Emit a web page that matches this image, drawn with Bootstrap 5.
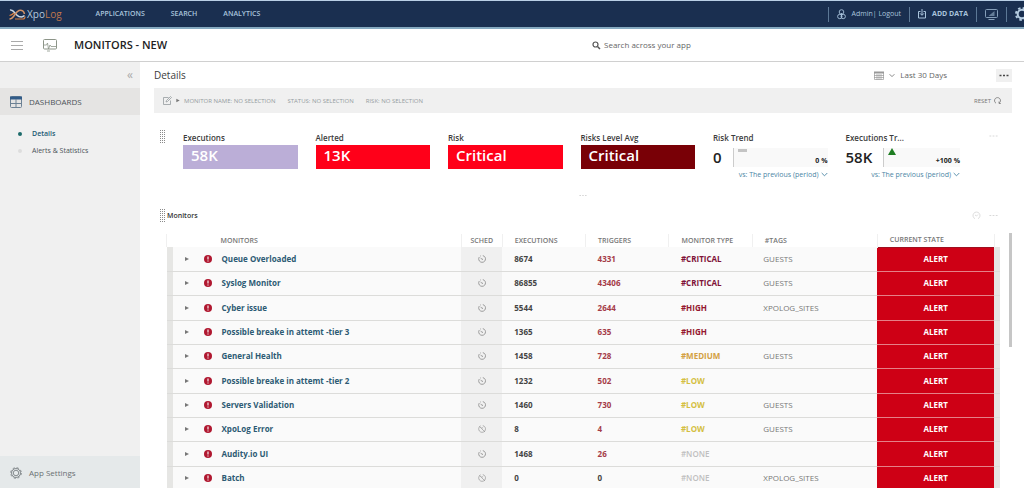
<!DOCTYPE html>
<html lang="en">
<head>
<meta charset="utf-8">
<meta name="viewport" content="width=device-width, initial-scale=1">
<title>XpoLog - Monitors</title>
<link href="https://cdn.jsdelivr.net/npm/bootstrap@5.3.0/dist/css/bootstrap.min.css" rel="stylesheet">
<style>
body { font-family: "Open Sans", "Noto Sans", sans-serif; font-size: 8px; line-height: 12px; color: #444; background: #fff; }
a { color: inherit; text-decoration: none; }
button { border: 0; background: none; padding: 0; color: inherit; font: inherit; }
svg { display: block; fill: none; stroke: currentColor; flex: none; }
.topbar { height: 29px; background: #1a2f50; border-top: 1px solid #b9cfe6; border-bottom: 2px solid #86aac0; color: #a9c4dc; font-size: 7px; padding-left: 9px; }
.brand-name { font-size: 10px; color: #b5c9de; margin-left: 1px; }
.brand-name b { color: #c0764c; font-weight: 400; }
.main-links { margin-left: 34px; gap: 26px; font-weight: 600; }
.tool { height: 15px; border-left: 1px solid #5c7896; padding: 0 8px; gap: 6px; }
.tool-gear { width: 18px; overflow: hidden; padding-right: 0; color: #b4cbe0; }
.titlebar { height: 33px; border-bottom: 1px solid #d0d0d0; padding-left: 11px; }
.titlebar h1 { font-size: 11px; line-height: 16px; font-weight: 600; color: #222; }
.menu-btn { color: #aaa; margin-right: 20px; }
.app-icon { color: #8c9488; margin-right: 17px; }
.search { flex: 0 0 432px; gap: 3px; color: #555; }
.search input { border: 0; outline: 0; padding: 0; width: 200px; font-size: 8px; color: #555; }
.search input::placeholder { color: #666; opacity: 1; }
.side { width: 140px; flex: none; background: #f0f0f0; color: #4c5358; }
.side-fold { height: 26px; padding: 0 7px; color: #aaa; font-size: 12px; }
.side-group { height: 27px; padding-left: 10px; gap: 7px; background: #e5e4e3; }
.side-list { padding: 10px 0 0 18px; }
.side-list a { height: 17px; gap: 10px; font-size: 7px; }
.side-list a.current { font-weight: 600; color: #235a73; }
.dot { width: 4px; height: 4px; border-radius: 50%; background: #ddd; }
.current .dot { background: #1d6b6b; }
.side-foot { height: 32px; padding: 2px 0 0 10px; gap: 7px; background: #e5e9ea; color: #6a7074; }
.content { padding: 0 12px 0 14px; min-width: 0; }
.page-head { height: 26px; }
.page-head h2 { font-size: 10px; line-height: 14px; font-weight: 400; color: #3c3c3c; }
.range { gap: 5px; margin-right: 49px; color: #666; }
.range-icon { color: #999; }
.more { width: 16px; height: 13px; background: #f0f0f0; }
.filters { height: 25px; background: #f0f0f0; color: #959c9f; font-size: 6px; padding: 0 11px 0 9px; }
.filter-items { gap: 12px; }
.reset { gap: 3px; color: #777; }
.kpis { padding: 16px 14px 0 6px; }
.grip { flex: none; width: 5px; height: 15px; background: linear-gradient(#fff 50%, transparent 50%) 0 0 / 5px 2px, linear-gradient(90deg, #8a8a8a 50%, #fff 50%) 0 0 / 2px 2px; }
.kpi-grid { display: grid; grid-template-columns: repeat(6, 1fr); margin: 1px 11px 0 18px; }
.kpi { padding-right: 18px; }
.kpi-name { font-size: 8px; font-weight: 600; line-height: 12px; color: #3b3b3b; padding-top: 2px; }
.kpi-box { height: 24px; padding-left: 8px; font-size: 15px; line-height: 21px; font-weight: 600; color: #fff; margin-top: 1px; }
.trend { height: 24px; margin-top: 1px; color: #222; gap: 11px; }
.trend-value { font-size: 15px; line-height: 24px; font-weight: 600; }
.trend-area { background: #f9f9f9; border-left: 1px solid #ccc; height: 19px; padding-left: 4px; font-weight: 700; font-size: 7px; }
.flat { width: 9px; height: 3px; background: #c4c4c4; margin-top: 1px; }
.up { width: 0; height: 0; border: 4px solid transparent; border-top: 0; border-bottom: 7px solid #1e7d22; }
.vs { font-size: 7px; line-height: 11px; color: #4b86a5; gap: 2px; }
.split { height: 17px; color: #ccc; }
.faint { color: #d4d4d4; }
.panel { padding: 11px 0 0 6px; }
.panel-head { height: 15px; padding-right: 14px; }
.panel-head h3 { font-size: 7px; line-height: 12px; font-weight: 600; color: #333; margin-left: 2px; }
.grid-wrap { margin: 11px 9px 0 6px; min-width: 0; }
.scroll { flex: none; width: 3px; height: 114px; background: #c6c6c6; margin-top: 10px; }
.monitors { width: 100%; table-layout: fixed; border-collapse: collapse; font-size: 8px; line-height: 12px; }
.monitors th { height: 13px; padding: 0 0 0 12px; font-size: 7px; line-height: 12px; font-weight: 600; color: #777; border-left: 1px solid #f0f0f0; white-space: nowrap; }
.monitors tbody tr { height: 24px; background: #fafafa; border-bottom: 1px solid #dcdcda; font-weight: 700; }
.monitors tbody tr:nth-child(3n) { height: 25px; }
.monitors td { padding: 0 0 0 12px; white-space: nowrap; }
.monitors .edge { padding: 0; background: #e6e6e4; }
.monitors .name { padding-left: 12px; color: #2d5a74; }
.monitors th.name { padding-left: 48px; color: #777; border: 0; }
.arrow { margin-right: 15px; }
.bang { margin-right: 10px; }
.monitors .sched { padding: 0; background: #f0f0f0; color: #888; }
.monitors th.sched { background: none; text-align: center; color: #777; }
.monitors .hits { color: #a53c48; }
.monitors .tags { font-weight: 400; color: #777; padding-left: 11px; }
.monitors td.state { background: #ce0015; color: #fff; text-align: center; padding: 0; border-bottom: 1px solid #e58088; }
.monitors tbody tr:first-child td.state { border-top: 1px solid #9f1020; }
.crit { color: #7f1238; } .high { color: #95182f; } .med { color: #d3a043; } .low { color: #d4bf42; } .monitors .none { color: #bfbfbf; font-weight: 600; }
.c-exec, .c-trig, .c-type { width: 10%; } .c-tags { width: 15%; } .c-state { width: 14%; } .c-sched { width: 41px; } .c-edge { width: 6px; }
</style>
<script src="https://cdn.jsdelivr.net/npm/bootstrap@5.3.0/dist/js/bootstrap.bundle.min.js"></script>
</head>
<body class="vh-100 d-flex flex-column overflow-hidden">
<svg width="0" height="0" class="position-absolute">
  <symbol id="play" viewBox="0 0 4 6"><path d="M0 1v4l4-2z" fill="#777" stroke="none"/></symbol>
  <symbol id="warn" viewBox="0 0 8 8"><circle cx="4" cy="4" r="4" fill="#b01830" stroke="none"/><path d="M4 1.6v3M4 5.5v1" stroke="#fff" stroke-width="1.1"/></symbol>
  <symbol id="clock" viewBox="0 0 8 8"><path d="M4.8.6A3.4 3.4 0 1 1 1.3 2M2.3 1.1l.7-.4M4.2 4.2 2.6 3.2M4 4.3h1" stroke-width=".8"/></symbol>
  <symbol id="clock-off" viewBox="0 0 8 8"><path d="M4.8.6A3.4 3.4 0 1 1 1.3 2M1 1l6 6M2.3 1.1l.7-.4M3.5 2.6l1.6.4" stroke-width=".6"/></symbol>
  <symbol id="chev" viewBox="0 0 7 5"><path d="M.7 1l2.8 2.8L6.3 1" stroke-width=".9"/></symbol>
  <symbol id="dots" viewBox="0 0 10 3"><path d="M.5 1.5h2M4 1.5h2M7.5 1.5h2" stroke-width="1.7"/></symbol>
  <symbol id="dots-thin" viewBox="0 0 10 3"><path d="M.5 1.5h2M4 1.5h2M7.5 1.5h2" stroke-width="1"/></symbol>
  <symbol id="gear" viewBox="0 0 14 14"><circle cx="7" cy="7" r="4.300"/><circle cx="7" cy="7" r="6" stroke-dasharray="2.500 2.212"/></symbol>
</svg>

<header class="topbar d-flex align-items-center flex-shrink-0">
  <a href="#" class="d-flex align-items-center">
    <svg width="17" height="13" viewBox="0 0 17 13"><path d="M1 2c4-1 5 5 9 6.500 3 1 4.500 0 5.500-1" stroke="#c8d4e0" stroke-width="1.500"/><path d="M.5 11C5 11 6 4 10 2.500c3-1 5 1 5.500 3.500" stroke="#d49468" stroke-width="1.500"/><path d="M.5 7.500C3 7 4 6 5 5M6 11h8c1.500 0 2-1 2-2.500" stroke="#dc7f3c" stroke-width="1.200"/></svg>
    <span class="brand-name">Xpo<b>Log</b></span>
  </a>
  <nav class="main-links d-flex"><a href="#">APPLICATIONS</a><a href="#">SEARCH</a><a href="#">ANALYTICS</a></nav>
  <div class="ms-auto d-flex align-items-center">
    <div class="tool d-flex align-items-center">
      <svg width="9" height="11" viewBox="0 0 9 11" stroke-width=".9"><circle cx="4.500" cy="3" r="2.300"/><circle cx="2.800" cy="7.500" r="2.200"/><circle cx="6.200" cy="7.500" r="2.200"/><path d="M4.500 4v4"/></svg>
      <span><a href="#">Admin</a>| <a href="#">Logout</a></span>
    </div>
    <button type="button" class="tool d-flex align-items-center fw-bold">
      <svg width="8" height="10" viewBox="0 0 8 10"><path d="M2.500 2.500h-2v6.500h7v-6.500h-2M4 0v6M2 4.300l2 2 2-2"/></svg>ADD DATA
    </button>
    <button type="button" class="tool d-flex align-items-center" aria-label="Console">
      <svg width="13" height="11" viewBox="0 0 13 11" opacity=".75"><rect x=".5" y=".5" width="12" height="8" rx="1"/><path d="M3.500 10.500h6"/><path d="M3.500 7L9.500 2v5z" fill="currentColor" stroke="none" opacity=".7"/></svg>
    </button>
    <button type="button" class="tool tool-gear d-flex align-items-center justify-content-start" aria-label="Settings"><svg width="14" height="14" viewBox="0 0 14 14" stroke-width="2"><use href="#gear"/></svg></button>
  </div>
</header>

<div class="titlebar d-flex align-items-center flex-shrink-0">
  <button type="button" class="menu-btn" aria-label="Menu"><svg width="12" height="9" viewBox="0 0 12 9"><path d="M0 .5h12M0 4.500h12M0 8.500h12"/></svg></button>
  <svg width="14" height="13" viewBox="0 0 14 13" class="app-icon"><rect x=".5" y=".5" width="13" height="9.500" rx="1"/><path d="M1 6h2.500l1-2 1 6 1.500-4 1 1.500H13M4 12h3" stroke-width=".8"/></svg>
  <h1 class="mb-0">MONITORS - NEW</h1>
  <label class="search ms-auto d-flex align-items-center">
    <svg width="9" height="9" viewBox="0 0 9 9"><circle cx="3.500" cy="3.500" r="2.500" stroke-width="1.200"/><path d="M5.500 5.500L8 8" stroke-width="1.500"/></svg>
    <input type="text" placeholder="Search across your app" aria-label="Search across your app">
  </label>
</div>

<div class="d-flex flex-grow-1 overflow-hidden">
  <aside class="side d-flex flex-column">
    <button type="button" class="side-fold text-end" aria-label="Collapse">«</button>
    <a href="#" class="side-group d-flex align-items-center">
      <svg width="12" height="12" viewBox="0 0 12 12"><rect x=".5" y=".5" width="11" height="11" rx="1" stroke="#6c8194"/><path d="M0 2h12" stroke="#315b88" stroke-width="3"/><path d="M6 3v9M1 7.500h10" stroke="#6c8194"/></svg>DASHBOARDS
    </a>
    <nav class="side-list">
      <a href="#" class="current d-flex align-items-center"><i class="dot"></i>Details</a>
      <a href="#" class="d-flex align-items-center"><i class="dot"></i>Alerts &amp; Statistics</a>
    </nav>
    <a href="#" class="side-foot d-flex align-items-center mt-auto">
      <svg width="12" height="12" viewBox="0 0 14 14" stroke-width=".9"><circle cx="7" cy="7" r="3.200"/><circle cx="7" cy="7" r="5.200"/><circle cx="7" cy="7" r="6.200" stroke-dasharray="2.600 2.270"/></svg>App Settings
    </a>
  </aside>

  <main class="content flex-grow-1">
    <div class="page-head d-flex align-items-center">
      <h2 class="mb-0">Details</h2>
      <button type="button" class="range ms-auto d-flex align-items-center">
        <svg width="10" height="9" viewBox="0 0 10 9" class="range-icon"><path d="M0 1.500h10" stroke-width="2"/><path d="M.5 2v6.500h9V2M0 4.500h10M0 6.500h10M3 3v6M5 3v6M7 3v6" stroke-width=".7"/></svg>
        <svg width="6" height="5"><use href="#chev"/></svg>Last 30 Days
      </button>
      <button type="button" class="more d-flex align-items-center justify-content-center" aria-label="More"><svg width="10" height="3"><use href="#dots"/></svg></button>
    </div>

    <div class="filters d-flex align-items-center">
      <svg width="9" height="9" viewBox="0 0 9 9" stroke-width=".8"><path d="M5.500 1.500h-5v7h7v-4M3 6l.5-1.500L7.500.5l1 1-4 4z"/></svg>
      <svg width="4" height="5" class="ms-1 me-1"><use href="#play"/></svg>
      <div class="filter-items d-flex"><span>MONITOR NAME: NO SELECTION</span><span>STATUS: NO SELECTION</span><span>RISK: NO SELECTION</span></div>
      <button type="button" class="reset ms-auto d-flex align-items-center">RESET <svg width="7" height="7" viewBox="0 0 7 7"><path d="M2 6.200A3 3 0 1 1 5 6.200M5 4.500v2h1.800" stroke-width=".8"/></svg></button>
    </div>

    <section class="kpis d-flex align-items-start">
      <div class="grip"></div>
      <div class="kpi-grid flex-grow-1">
        <div class="kpi"><div class="kpi-name">Executions</div><div class="kpi-box" style="background:#bbaed7">58K</div></div>
        <div class="kpi"><div class="kpi-name">Alerted</div><div class="kpi-box" style="background:#ff0019">13K</div></div>
        <div class="kpi"><div class="kpi-name">Risk</div><div class="kpi-box" style="background:#ff0019">Critical</div></div>
        <div class="kpi"><div class="kpi-name">Risks Level Avg</div><div class="kpi-box" style="background:#790006">Critical</div></div>
        <div class="kpi"><div class="kpi-name">Risk Trend</div>
          <div class="trend d-flex align-items-center"><span class="trend-value">0</span><div class="trend-area flex-grow-1 d-flex justify-content-between"><i class="flat"></i><span class="align-self-end">0 %</span></div></div>
          <button type="button" class="vs d-flex align-items-center ms-auto">vs: The previous (period) <svg width="7" height="5"><use href="#chev"/></svg></button></div>
        <div class="kpi"><div class="kpi-name">Executions Tr...</div>
          <div class="trend d-flex align-items-center"><span class="trend-value">58K</span><div class="trend-area flex-grow-1 d-flex justify-content-between"><i class="up"></i><span class="align-self-end">+100 %</span></div></div>
          <button type="button" class="vs d-flex align-items-center ms-auto">vs: The previous (period) <svg width="7" height="5"><use href="#chev"/></svg></button></div>
      </div>
      <button type="button" class="faint" aria-label="More"><svg width="9" height="14" viewBox="0 0 10 14"><path d="M.5 7h2M4 7h2M7.500 7h2"/></svg></button>
    </section>

    <div class="split d-flex align-items-end justify-content-center"><svg width="8" height="3"><use href="#dots-thin"/></svg></div>

    <section class="panel">
      <div class="panel-head d-flex align-items-center">
        <div class="grip"></div><h3 class="mb-0">Monitors</h3>
        <button type="button" class="faint ms-auto me-2" aria-label="Refresh"><svg width="9" height="9" viewBox="0 0 9 9"><path d="M3 7.700A3.500 3.500 0 1 1 6 7.700M3 4l1.500 1L6 3.500" stroke-width=".8"/></svg></button>
        <button type="button" class="faint" aria-label="More"><svg width="9" height="3"><use href="#dots-thin"/></svg></button>
      </div>
      <div class="d-flex align-items-start">
      <div class="grid-wrap flex-grow-1">
      <table class="monitors">
        <colgroup><col class="c-edge"><col><col class="c-sched"><col class="c-exec"><col class="c-trig"><col class="c-type"><col class="c-tags"><col class="c-state"><col class="c-edge"></colgroup>
        <thead><tr><th class="p-0"></th><th class="name">MONITORS</th><th class="sched">SCHED</th><th>EXECUTIONS</th><th>TRIGGERS</th><th>MONITOR TYPE</th><th>#TAGS</th><th>CURRENT STATE</th><th class="p-0"></th></tr></thead>
        <tbody>
        <tr><td class="edge"></td><td class="name"><a href="#" class="d-flex align-items-center"><svg class="arrow" width="4" height="6"><use href="#play"/></svg><svg class="bang" width="8" height="8"><use href="#warn"/></svg>Queue Overloaded</a></td><td class="sched"><svg class="mx-auto" width="8" height="8"><use href="#clock"/></svg></td><td>8674</td><td class="hits">4331</td><td class="crit">#CRITICAL</td><td class="tags">GUESTS</td><td class="state">ALERT</td><td class="edge"></td></tr>
        <tr><td class="edge"></td><td class="name"><a href="#" class="d-flex align-items-center"><svg class="arrow" width="4" height="6"><use href="#play"/></svg><svg class="bang" width="8" height="8"><use href="#warn"/></svg>Syslog Monitor</a></td><td class="sched"><svg class="mx-auto" width="8" height="8"><use href="#clock"/></svg></td><td>86855</td><td class="hits">43406</td><td class="crit">#CRITICAL</td><td class="tags">GUESTS</td><td class="state">ALERT</td><td class="edge"></td></tr>
        <tr><td class="edge"></td><td class="name"><a href="#" class="d-flex align-items-center"><svg class="arrow" width="4" height="6"><use href="#play"/></svg><svg class="bang" width="8" height="8"><use href="#warn"/></svg>Cyber issue</a></td><td class="sched"><svg class="mx-auto" width="8" height="8"><use href="#clock"/></svg></td><td>5544</td><td class="hits">2644</td><td class="high">#HIGH</td><td class="tags">XPOLOG_SITES</td><td class="state">ALERT</td><td class="edge"></td></tr>
        <tr><td class="edge"></td><td class="name"><a href="#" class="d-flex align-items-center"><svg class="arrow" width="4" height="6"><use href="#play"/></svg><svg class="bang" width="8" height="8"><use href="#warn"/></svg>Possible breake in attemt -tier 3</a></td><td class="sched"><svg class="mx-auto" width="8" height="8"><use href="#clock"/></svg></td><td>1365</td><td class="hits">635</td><td class="high">#HIGH</td><td class="tags"></td><td class="state">ALERT</td><td class="edge"></td></tr>
        <tr><td class="edge"></td><td class="name"><a href="#" class="d-flex align-items-center"><svg class="arrow" width="4" height="6"><use href="#play"/></svg><svg class="bang" width="8" height="8"><use href="#warn"/></svg>General Health</a></td><td class="sched"><svg class="mx-auto" width="8" height="8"><use href="#clock"/></svg></td><td>1458</td><td class="hits">728</td><td class="med">#MEDIUM</td><td class="tags">GUESTS</td><td class="state">ALERT</td><td class="edge"></td></tr>
        <tr><td class="edge"></td><td class="name"><a href="#" class="d-flex align-items-center"><svg class="arrow" width="4" height="6"><use href="#play"/></svg><svg class="bang" width="8" height="8"><use href="#warn"/></svg>Possible breake in attemt -tier 2</a></td><td class="sched"><svg class="mx-auto" width="8" height="8"><use href="#clock"/></svg></td><td>1232</td><td class="hits">502</td><td class="low">#LOW</td><td class="tags"></td><td class="state">ALERT</td><td class="edge"></td></tr>
        <tr><td class="edge"></td><td class="name"><a href="#" class="d-flex align-items-center"><svg class="arrow" width="4" height="6"><use href="#play"/></svg><svg class="bang" width="8" height="8"><use href="#warn"/></svg>Servers Validation</a></td><td class="sched"><svg class="mx-auto" width="8" height="8"><use href="#clock"/></svg></td><td>1460</td><td class="hits">730</td><td class="low">#LOW</td><td class="tags">GUESTS</td><td class="state">ALERT</td><td class="edge"></td></tr>
        <tr><td class="edge"></td><td class="name"><a href="#" class="d-flex align-items-center"><svg class="arrow" width="4" height="6"><use href="#play"/></svg><svg class="bang" width="8" height="8"><use href="#warn"/></svg>XpoLog Error</a></td><td class="sched"><svg class="mx-auto" width="8" height="8"><use href="#clock-off"/></svg></td><td>8</td><td class="hits">4</td><td class="low">#LOW</td><td class="tags">GUESTS</td><td class="state">ALERT</td><td class="edge"></td></tr>
        <tr><td class="edge"></td><td class="name"><a href="#" class="d-flex align-items-center"><svg class="arrow" width="4" height="6"><use href="#play"/></svg><svg class="bang" width="8" height="8"><use href="#warn"/></svg>Audity.io UI</a></td><td class="sched"><svg class="mx-auto" width="8" height="8"><use href="#clock"/></svg></td><td>1468</td><td class="hits">26</td><td class="none">#NONE</td><td class="tags"></td><td class="state">ALERT</td><td class="edge"></td></tr>
        <tr><td class="edge"></td><td class="name"><a href="#" class="d-flex align-items-center"><svg class="arrow" width="4" height="6"><use href="#play"/></svg><svg class="bang" width="8" height="8"><use href="#warn"/></svg>Batch</a></td><td class="sched"><svg class="mx-auto" width="8" height="8"><use href="#clock-off"/></svg></td><td>0</td><td>0</td><td class="none">#NONE</td><td class="tags">XPOLOG_SITES</td><td class="state">ALERT</td><td class="edge"></td></tr>
        </tbody>
      </table>
      </div>
      <div class="scroll"></div>
      </div>
    </section>
  </main>
</div>
</body>
</html>
